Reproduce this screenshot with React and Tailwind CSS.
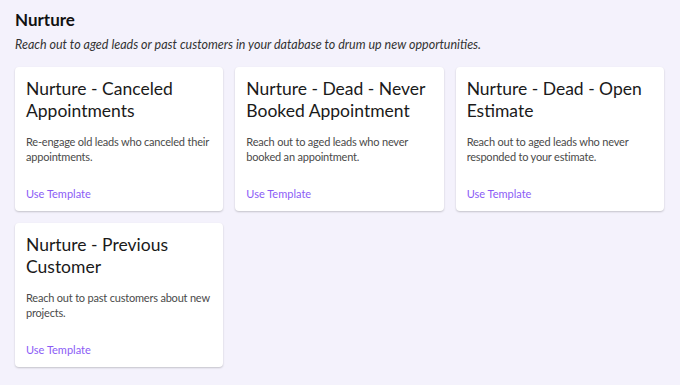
import React from "react";

const cards = [
  { title: "Nurture - Canceled Appointments", desc: "Re-engage old leads who canceled their appointments." },
  { title: "Nurture - Dead - Never Booked Appointment", desc: "Reach out to aged leads who never booked an appointment." },
  { title: "Nurture - Dead - Open Estimate", desc: "Reach out to aged leads who never responded to your estimate." },
  { title: "Nurture - Previous Customer", desc: "Reach out to past customers about new projects." },
];

export default function App() {
  return (
    <div className="w-[680px] h-[385px] bg-[#f4f2fc] px-[15px] pt-[9px] text-[#111] overflow-hidden" style={{ fontFamily: "Lato, 'Noto Sans', sans-serif" }}>
      <h1 className="text-[17px] font-bold leading-[22px]">Nurture</h1>
      <p className="mt-[6px] text-[12.5px] italic leading-[16px] text-[#333]">Reach out to aged leads or past customers in your database to drum up new opportunities.</p>
      <div className="mt-[14px] grid grid-cols-3 gap-x-[12px] gap-y-[12px] w-[649px]">
        {cards.map((c) => (
          <div key={c.title} className="bg-white rounded-[4px] h-[144px] px-[11px] pt-[11px] shadow-[0_1px_2px_rgba(0,0,0,0.2)] flex flex-col">
            <h2 className="text-[17.5px] leading-[22px] text-[#1a1a1a] font-normal">{c.title}</h2>
            <p className="mt-[12px] text-[11px] leading-[15px] tracking-[-0.2px] text-[#4a4a4a]">{c.desc}</p>
            <div className="mt-auto mb-[10px] text-[11px] leading-[14px] text-[#8b5cf6]">Use Template</div>
          </div>
        ))}
      </div>
    </div>
  );
}
